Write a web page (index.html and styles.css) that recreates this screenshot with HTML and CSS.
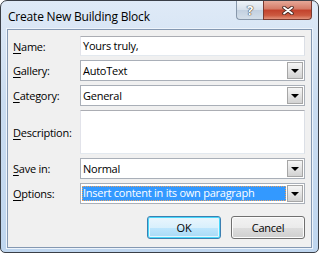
FILE: index.html
```html
<!DOCTYPE html>
<html lang="en">
<head>
  <meta charset="UTF-8" />
  <title>Create New Building Block</title>
  <link rel="stylesheet" href="styles.css">
</head>
<body>
  <div class="bb-dialog">
    <div class="bb-titlebar">
      <span class="bb-caption">Create New Building Block</span>
      <div class="bb-sysbtns">
        <span class="bb-help">?</span>
        <span class="bb-close">
          <svg width="12" height="9" viewBox="0 0 12 9">
            <path d="M2 1.5 L10 7.5 M10 1.5 L2 7.5" stroke="#4a2a24" stroke-width="3.6" stroke-linecap="round" />
            <path d="M2 1.5 L10 7.5 M10 1.5 L2 7.5" stroke="#fff" stroke-width="1.8" stroke-linecap="round" />
          </svg>
        </span>
      </div>
    </div>

    <div class="bb-body">
      <div class="bb-fields">
        <div class="bb-row">
          <label class="bb-label"><u>N</u>ame:</label>
          <div class="bb-text">Yours truly,</div>
        </div>
        <div class="bb-row">
          <label class="bb-label"><u>G</u>allery:</label>
          <div class="bb-combo"><span class="bb-value">AutoText</span><span class="bb-drop"></span></div>
        </div>
        <div class="bb-row">
          <label class="bb-label"><u>C</u>ategory:</label>
          <div class="bb-combo"><span class="bb-value">General</span><span class="bb-drop"></span></div>
        </div>
        <div class="bb-row">
          <label class="bb-label"><u>D</u>escription:</label>
          <div class="bb-text bb-area"></div>
        </div>
        <div class="bb-row">
          <label class="bb-label"><u>S</u>ave in:</label>
          <div class="bb-combo"><span class="bb-value">Normal</span><span class="bb-drop"></span></div>
        </div>
        <div class="bb-row">
          <label class="bb-label"><u>O</u>ptions:</label>
          <div class="bb-combo"><span class="bb-value selected">Insert content in its own paragraph</span><span class="bb-drop"></span></div>
        </div>
      </div>

      <div class="bb-actions">
        <button class="bb-btn default">OK</button>
        <button class="bb-btn">Cancel</button>
      </div>
    </div>
  </div>
</body>
</html>
```

FILE: styles.css
```css
body {
  margin: 0;
  background: #fff;
  font-family: "Open Sans", "Noto Sans", sans-serif;
  font-size: 11px;
  letter-spacing: -0.25px;
  color: #000;
}

.bb-dialog {
  width: 319px;
  height: 253px;
  box-sizing: border-box;
  border: 1px solid #3a3f47;
  border-radius: 7px 7px 5px 5px;
  padding: 0 6px 4px 6px;
  background: linear-gradient(#dfeaf7, #cadcf0 40%, #bfd6ef);
  display: flex;
  flex-direction: column;
}

/* title bar */
.bb-titlebar {
  height: 28px;
  display: flex;
  align-items: flex-start;
}

.bb-caption {
  padding: 7px 0 0 1px;
  font-size: 12px;
  letter-spacing: -0.2px;
}

.bb-sysbtns {
  margin-left: auto;
  display: flex;
  height: 19px;
}

.bb-help {
  width: 26px;
  height: 18px;
  border: 1px solid #8797ab;
  border-top: none;
  border-right: none;
  border-radius: 0 0 0 4px;
  background: linear-gradient(#eef3f8, #d6e0eb 50%, #c2d0e0 51%, #d4dfea);
  color: #fff;
  font-weight: bold;
  font-size: 13px;
  line-height: 18px;
  text-align: center;
  text-shadow: 0 0 1px #444, 0 0 1px #444, 0 0 1px #444;
}

.bb-close {
  width: 47px;
  height: 18px;
  border: 1px solid #7a3a30;
  border-top: none;
  border-radius: 0 0 4px 0;
  background: linear-gradient(#e6a898, #d47a66 45%, #c2412c 50%, #cc5a40 80%, #e2937c);
  display: flex;
  align-items: center;
  justify-content: center;
}

/* client area */
.bb-body {
  flex: 1;
  border: 1px solid #8498b2;
  box-shadow: 0 0 0 1px #eef4fb;
  background: #f0f0f0;
  padding: 6px 6px 0 5px;
  display: flex;
  flex-direction: column;
}

.bb-fields {
  display: flex;
  flex-direction: column;
  gap: 4px;
}

.bb-row {
  display: grid;
  grid-template-columns: 67px 1fr;
  align-items: center;
}

.bb-label u {
  text-decoration-thickness: 1px;
  text-underline-offset: 2px;
}

.bb-text,
.bb-combo {
  box-sizing: border-box;
  height: 21px;
  border: 1px solid #abadb3;
  border-left-color: #e2e3ea;
  border-right-color: #dbdfe6;
  border-bottom-color: #e3e9ef;
  background: #fff;
}

.bb-text {
  height: 20px;
  padding-left: 2px;
  line-height: 18px;
}

.bb-text.bb-area {
  height: 44px;
}

.bb-combo {
  display: flex;
  border: 1px solid #a9afb8;
}

.bb-value {
  flex: 1;
  padding-left: 2px;
  line-height: 19px;
  white-space: nowrap;
  overflow: hidden;
}

.bb-value.selected {
  margin: 2px 1px 2px 1px;
  padding-left: 1px;
  line-height: 13px;
  background: #3399ff;
  color: #fff;
  outline: 1px dotted #e8a060;
  outline-offset: -1px;
}

.bb-drop {
  width: 16px;
  margin: 1px 1px 1px 0;
  box-sizing: border-box;
  border: 1px solid #a6a6a6;
  background: linear-gradient(#f6f6f6, #e4e4e4 50%, #d2d2d2);
  display: flex;
  align-items: center;
  justify-content: center;
}

.bb-drop::after {
  content: "";
  border-left: 4px solid transparent;
  border-right: 4px solid transparent;
  border-top: 4px solid #000;
}

/* buttons */
.bb-actions {
  margin-top: 12px;
  display: flex;
  justify-content: flex-end;
  gap: 10px;
}

.bb-btn {
  width: 74px;
  height: 23px;
  padding: 0;
  font-family: inherit;
  font-size: 11px;
  letter-spacing: inherit;
  color: #000;
  border: 1px solid #707070;
  border-radius: 3px;
  background: linear-gradient(#f2f2f2, #ebebeb 50%, #dddddd 51%, #cfcfcf);
  box-shadow: inset 0 0 0 1px #fcfcfc;
}

.bb-btn.default {
  border-color: #3c7fb1;
  background: linear-gradient(#eaf6fd, #d9f0fc 50%, #bee6fd 51%, #a7d9f5);
  box-shadow: inset 0 0 0 1px #48d8fb, inset 0 0 0 2px #e6f5fd;
}
```
